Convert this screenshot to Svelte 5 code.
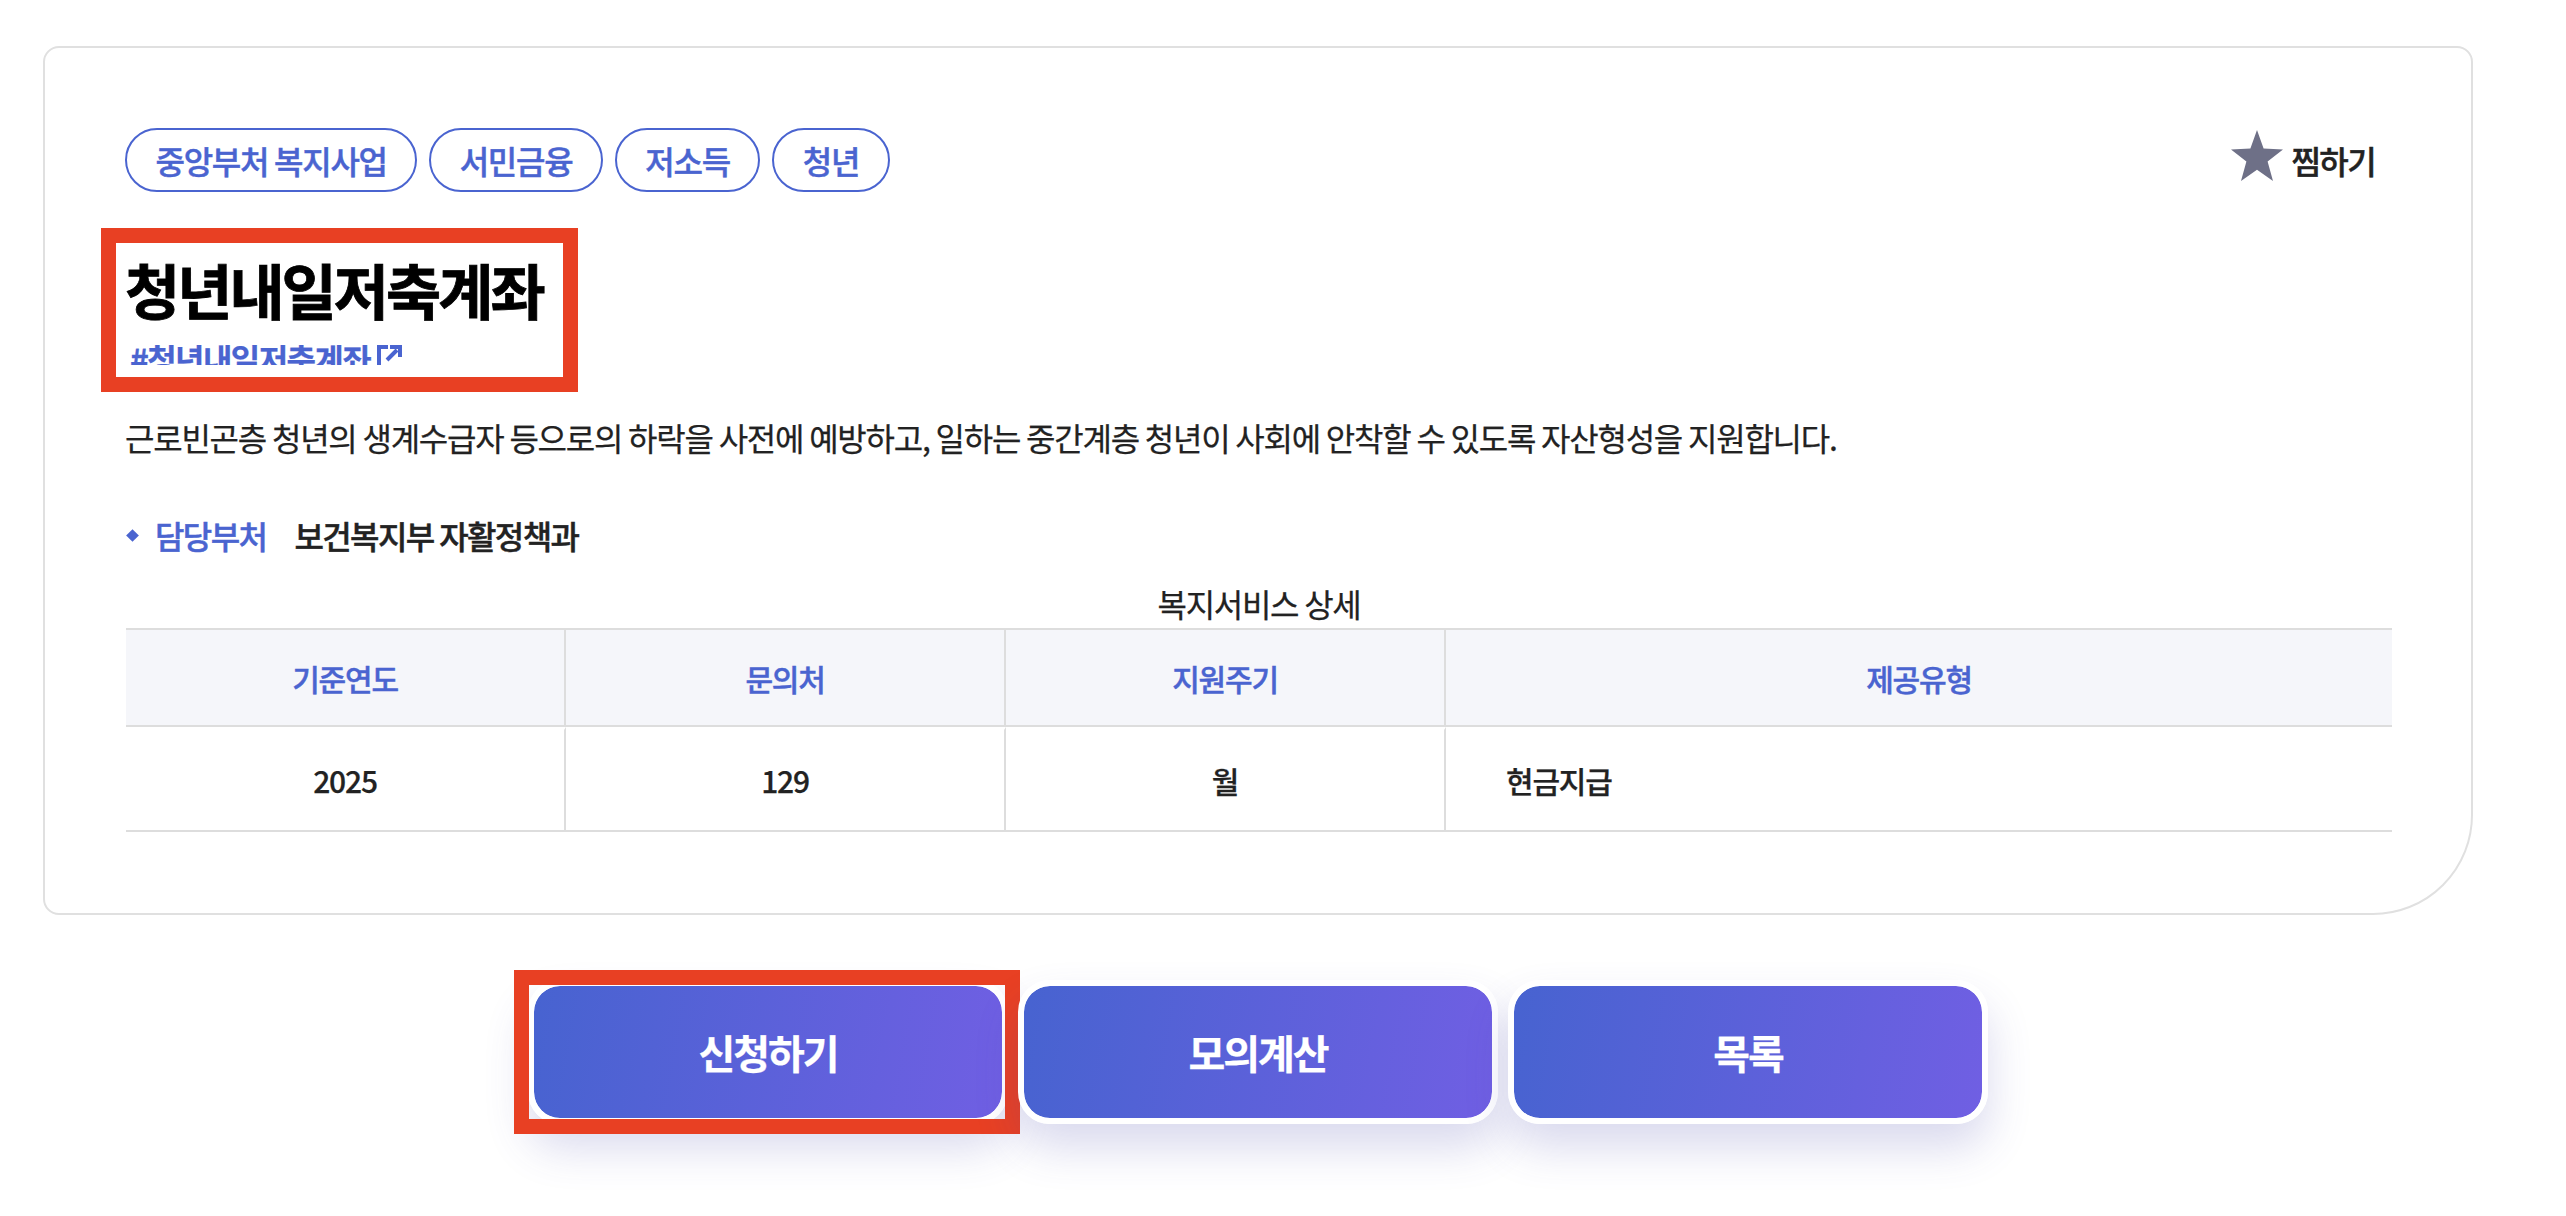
<script>
	const tags = ['중앙부처 복지사업', '서민금융', '저소득', '청년'];
	const columns = ['기준연도', '문의처', '지원주기', '제공유형'];
	const values = ['2025', '129', '월', '현금지급'];
	const actions = ['신청하기', '모의계산', '목록'];
</script>

<main class="page">
	<section class="card">
		<header class="top">
			<ul class="tags">
				{#each tags as tag}
					<li class="tag">{tag}</li>
				{/each}
			</ul>
			<button class="fav">
				<svg class="star" viewBox="0 0 52 51" aria-hidden="true">
					<polygon points="26,0 32.6,18.6 52,19.4 36.6,31.6 42,51 26,39.8 10,51 15.4,31.6 0,19.4 19.4,18.6" />
				</svg>
				<span>찜하기</span>
			</button>
		</header>

		<div class="heading">
			<h1>청년내일저축계좌</h1>
			<div class="hash">
				<a href="#top">#청년내일저축계좌</a>
				<svg class="ext" viewBox="0 0 25 25" aria-hidden="true">
					<path d="M11 2H2v23" />
					<path d="M10 15 20 5M13 2h10v10" />
				</svg>
			</div>
			<div class="mark"></div>
		</div>

		<p class="desc">근로빈곤층 청년의 생계수급자 등으로의 하락을 사전에 예방하고, 일하는 중간계층 청년이 사회에 안착할 수 있도록 자산형성을 지원합니다.</p>

		<dl class="dept">
			<dt>담당부처</dt>
			<dd>보건복지부 자활정책과</dd>
		</dl>

		<table>
			<caption>복지서비스 상세</caption>
			<thead>
				<tr>
					{#each columns as col}
						<th>{col}</th>
					{/each}
				</tr>
			</thead>
			<tbody>
				<tr>
					{#each values as val}
						<td>{val}</td>
					{/each}
				</tr>
			</tbody>
		</table>
	</section>

	<nav class="actions">
		{#each actions as action, i}
			<div class="action">
				<button class="btn">{action}</button>
				{#if i === 0}
					<div class="mark btn-mark"></div>
				{/if}
			</div>
		{/each}
	</nav>
</main>

<style>
	:global(body) {
		background: #fff;
	}

	.page {
		box-sizing: border-box;
		width: 2566px;
		height: 1216px;
		padding: 46px 93px 0 43px;
		overflow: hidden;
		font-family: "Noto Sans CJK KR", "Noto Sans", sans-serif;
		color: #222;
		-webkit-text-stroke: 0.25px currentColor;
	}

	.card {
		box-sizing: border-box;
		height: 869px;
		padding: 80px 79px 0 80px;
		background: #fff;
		border: 2px solid #e0e0e0;
		border-radius: 16px 16px 100px 16px;
	}

	.top {
		display: flex;
		justify-content: space-between;
		align-items: center;
	}

	.tags {
		display: flex;
		gap: 12px;
		margin: 0;
		padding: 0;
		list-style: none;
	}

	.tag {
		box-sizing: border-box;
		height: 64px;
		padding: 0 28.5px;
		border: 2px solid #4a64d0;
		border-radius: 32px;
		color: #4a64d0;
		font-size: 32px;
		font-weight: 500;
		letter-spacing: -1.28px;
		line-height: 61px;
		-webkit-text-stroke: 0.45px currentColor;
	}

	.fav {
		display: flex;
		align-items: center;
		gap: 8px;
		margin-right: 17px;
		padding: 0;
		border: 0;
		background: none;
		font: inherit;
		color: #222;
		font-size: 32px;
		font-weight: 500;
		letter-spacing: -1.6px;
		-webkit-text-stroke: 0.45px currentColor;
	}

	.star {
		width: 52px;
		height: 51px;
		margin-top: -9px;
		fill: #6e7087;
	}

	.heading {
		position: relative;
		width: 447px;
		height: 134px;
		margin: 51px 0 0 -9px;
		padding-left: 9px;
		box-sizing: border-box;
	}

	h1 {
		margin: 0;
		padding-top: 8px;
		color: #000;
		font-size: 60px;
		font-weight: 700;
		letter-spacing: -3px;
		line-height: 76px;
		-webkit-text-stroke: 0.8px currentColor;
	}

	.hash {
		display: flex;
		align-items: flex-start;
		gap: 7px;
		height: 20px;
		margin: 18px 0 0 5px;
		overflow: hidden;
	}

	.hash a {
		margin-top: -3px;
		color: #4a64d0;
		font-size: 32px;
		font-weight: 700;
		letter-spacing: -1.6px;
		line-height: 32px;
		text-decoration: none;
	}

	.ext {
		flex: none;
		width: 25px;
		height: 25px;
		fill: none;
		stroke: #4a64d0;
		stroke-width: 4;
	}

	.mark {
		position: absolute;
		inset: -15px;
		border: 15px solid #e84023;
		pointer-events: none;
	}

	.desc {
		margin: 38px 0 0;
		color: #222;
		font-size: 32px;
		letter-spacing: -1.24px;
		line-height: 44px;
	}

	.dept {
		display: flex;
		align-items: center;
		margin: 54px 0 0;
		font-size: 32px;
		font-weight: 500;
		letter-spacing: -1.6px;
		line-height: 44px;
		-webkit-text-stroke: 0.45px currentColor;
	}

	dt {
		display: flex;
		align-items: center;
		color: #4a64d0;
	}

	dt::before {
		content: "";
		width: 9px;
		height: 9px;
		margin: 0 18px 0 3px;
		background: #4a64d0;
		transform: rotate(45deg);
	}

	dd {
		margin: 0 0 0 28px;
	}

	table {
		width: 2266px;
		margin: 24px 0 0 1px;
		border-collapse: separate;
		border-spacing: 0;
		table-layout: fixed;
		font-size: 30px;
		letter-spacing: -1.2px;
	}

	caption {
		height: 47px;
		color: #222;
		font-size: 32px;
		letter-spacing: -1.28px;
		line-height: 44px;
	}

	th {
		height: 95px;
		padding: 0;
		background: #f5f6fa;
		border-top: 2px solid #ddd;
		border-bottom: 2px solid #ddd;
		border-right: 2px solid #ddd;
		color: #4a64d0;
		font-weight: 500;
		-webkit-text-stroke: 0.45px currentColor;
	}

	td {
		height: 100px;
		padding: 0;
		border-top: 3px solid #fff;
		border-bottom: 2px solid #ddd;
		border-right: 2px solid #ddd;
		text-align: center;
		font-weight: 500;
	}

	th:nth-child(-n + 3),
	td:nth-child(-n + 3) {
		width: 438px;
	}

	th:last-child,
	td:last-child {
		border-right: 0;
	}

	td:last-child {
		padding-left: 60px;
		text-align: left;
	}

	.actions {
		display: flex;
		justify-content: center;
		gap: 10px;
		margin-top: 65px;
	}

	.action {
		position: relative;
	}

	.btn {
		display: block;
		box-sizing: border-box;
		width: 480px;
		height: 144px;
		border: 6px solid #fff;
		border-radius: 32px;
		background: linear-gradient(100deg, #4763d0, #705fe3) padding-box;
		box-shadow: 0 24px 44px rgba(72, 72, 170, 0.2);
		color: #fff;
		font-family: inherit;
		font-size: 40px;
		font-weight: 700;
		letter-spacing: -2px;
	}

	.btn-mark {
		inset: -10px -12px -10px -14px;
	}
</style>
